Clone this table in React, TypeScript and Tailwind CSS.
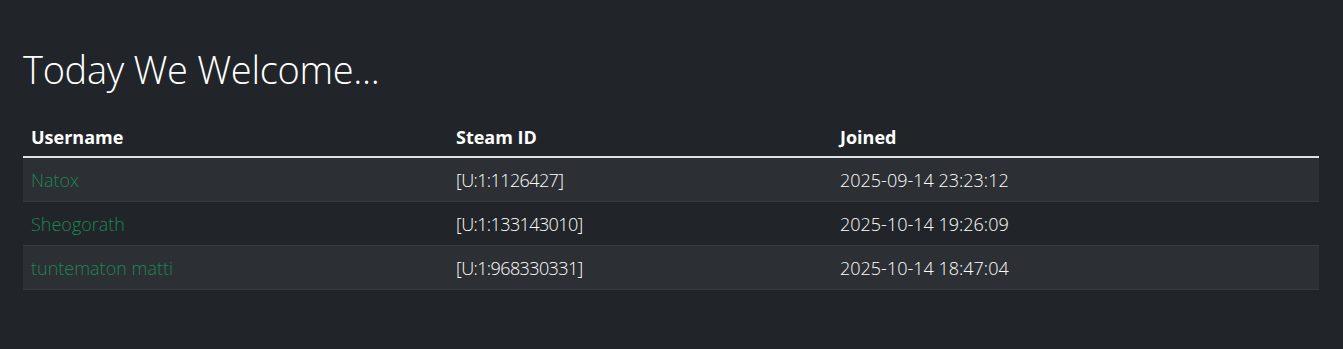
import React from "react";

const rows = [
  { name: "Natox", id: "[U:1:1126427]", joined: "2025-09-14 23:23:12" },
  { name: "Sheogorath", id: "[U:1:133143010]", joined: "2025-10-14 19:26:09" },
  { name: "tuntematon matti", id: "[U:1:968330331]", joined: "2025-10-14 18:47:04" },
];

export default function App() {
  return (
    <div
      className="min-h-[349px] w-full bg-[#212529] text-[#dee2e6] px-[23px] pt-[45px]"
      style={{ fontFamily: '"Open Sans", "Noto Sans", sans-serif' }}
    >
      <h1 className="text-[38px] leading-[48px] font-light tracking-[-0.3px] text-white mb-[20px]">Today We Welcome...</h1>
      <table className="w-[1296px] border-collapse text-[18px] leading-[27px]">
        <thead>
          <tr className="border-b-2 border-[#dee2e6]">
            <th className="w-[425px] text-left font-bold text-white px-2 pt-[11px] pb-[5px]">Username</th>
            <th className="w-[384px] text-left font-bold text-white px-2 pt-[11px] pb-[5px]">Steam ID</th>
            <th className="text-left font-bold text-white px-2 pt-[11px] pb-[5px]">Joined</th>
          </tr>
        </thead>
        <tbody>
          {rows.map((r, i) => (
            <tr key={r.id} className={`border-b border-[#373b3e] ${i % 2 === 0 ? "bg-[#2c3034]" : "bg-[#212529]"}`}>
              <td className="px-2 pt-[9px] pb-[7px] font-light text-[#198754]">{r.name}</td>
              <td className="px-2 pt-[9px] pb-[7px] font-light text-white tracking-[-0.6px]">{r.id}</td>
              <td className="px-2 pt-[9px] pb-[7px] font-light text-white">{r.joined}</td>
            </tr>
          ))}
        </tbody>
      </table>
    </div>
  );
}
